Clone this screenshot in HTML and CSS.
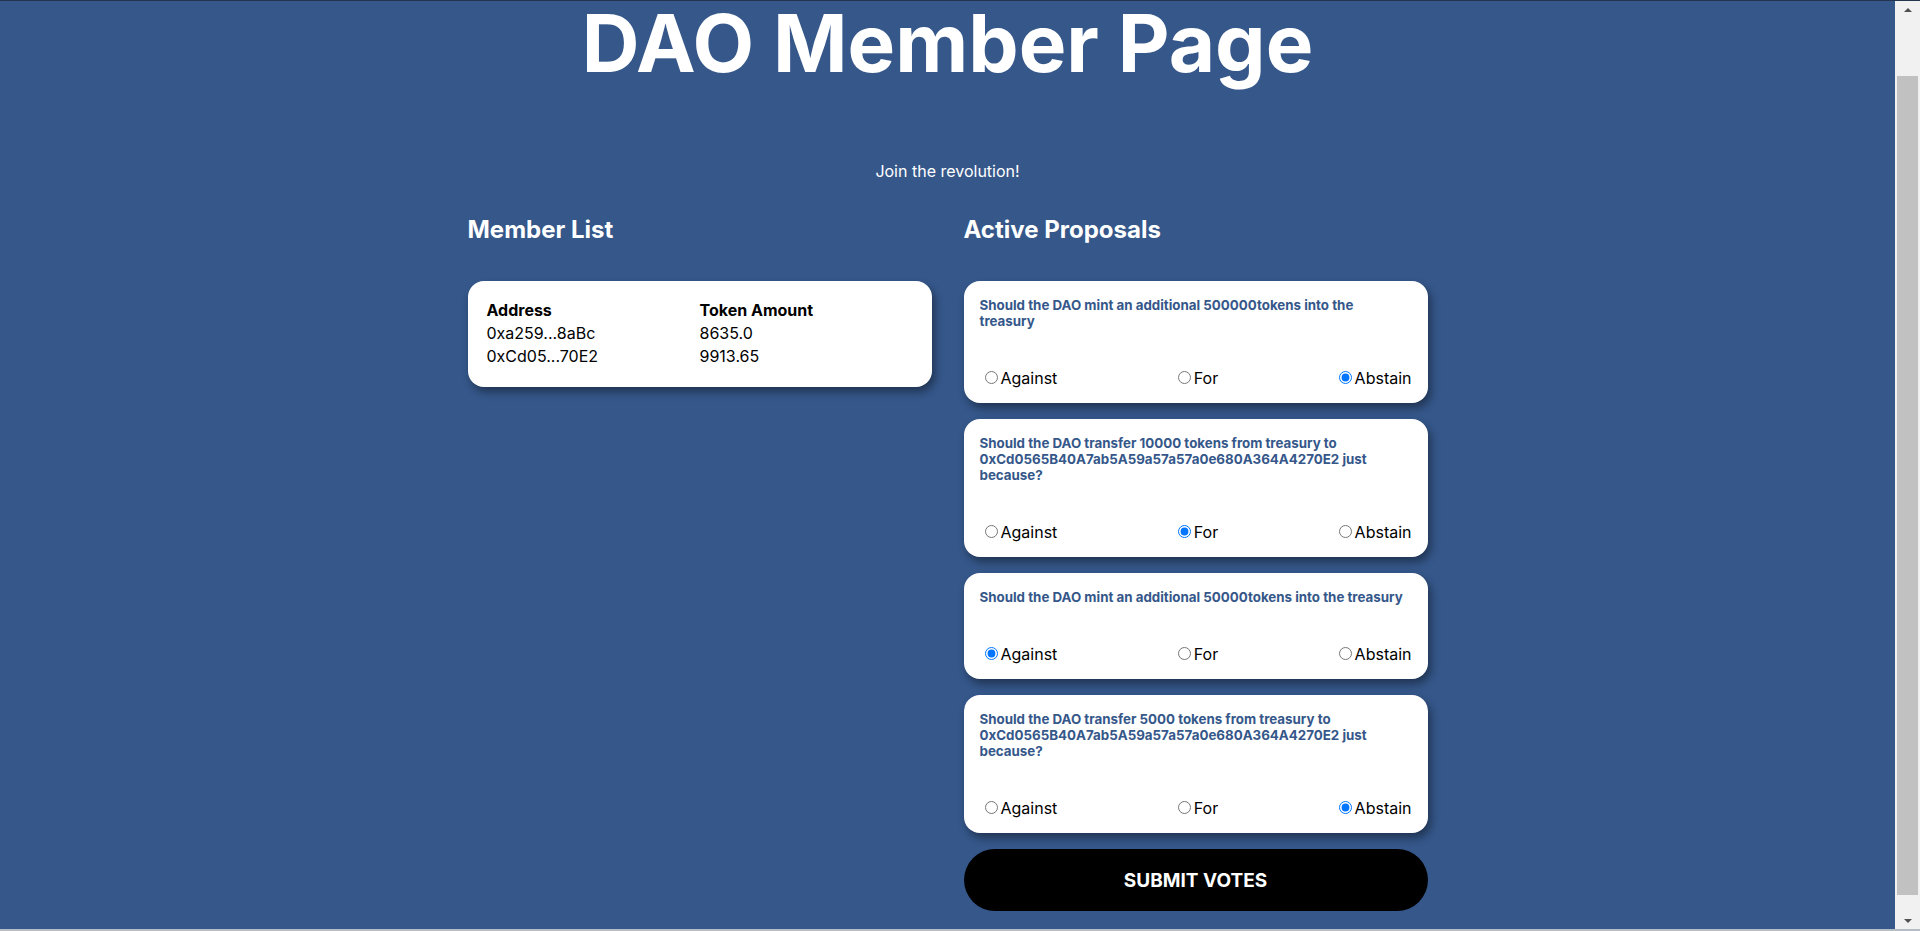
FILE: index.html
```html
<!DOCTYPE html>
<html lang="en">
<head>
<meta charset="utf-8">
<title>DAO Member Page</title>
<link rel="stylesheet" href="styles.css">
</head>
<body>
<main class="page">
  <h1 class="title">DAO Member Page</h1>
  <p class="tagline">Join the revolution!</p>
  <div class="columns">
    <section class="column">
      <h2 class="column-title">Member List</h2>
      <div class="card member-card">
        <div class="member-grid">
          <span class="head">Address</span><span class="head">Token Amount</span>
          <span>0xa259...8aBc</span><span>8635.0</span>
          <span>0xCd05...70E2</span><span>9913.65</span>
        </div>
      </div>
    </section>
    <section class="column">
      <h2 class="column-title">Active Proposals</h2>
      <form class="proposals">
        <div class="card proposal">
          <p class="question">Should the DAO mint an additional 500000tokens into the treasury</p>
          <div class="choices">
            <label class="choice"><input type="radio" name="p1">Against</label>
            <label class="choice"><input type="radio" name="p1">For</label>
            <label class="choice"><input type="radio" name="p1" checked>Abstain</label>
          </div>
        </div>
        <div class="card proposal">
          <p class="question">Should the DAO transfer 10000 tokens from treasury to 0xCd0565B40A7ab5A59a57a57a0e680A364A4270E2 just because?</p>
          <div class="choices">
            <label class="choice"><input type="radio" name="p2">Against</label>
            <label class="choice"><input type="radio" name="p2" checked>For</label>
            <label class="choice"><input type="radio" name="p2">Abstain</label>
          </div>
        </div>
        <div class="card proposal">
          <p class="question">Should the DAO mint an additional 50000tokens into the treasury</p>
          <div class="choices">
            <label class="choice"><input type="radio" name="p3" checked>Against</label>
            <label class="choice"><input type="radio" name="p3">For</label>
            <label class="choice"><input type="radio" name="p3">Abstain</label>
          </div>
        </div>
        <div class="card proposal">
          <p class="question">Should the DAO transfer 5000 tokens from treasury to 0xCd0565B40A7ab5A59a57a57a0e680A364A4270E2 just because?</p>
          <div class="choices">
            <label class="choice"><input type="radio" name="p4">Against</label>
            <label class="choice"><input type="radio" name="p4">For</label>
            <label class="choice"><input type="radio" name="p4" checked>Abstain</label>
          </div>
        </div>
        <button type="button" class="submit">Submit Votes</button>
      </form>
    </section>
  </div>
</main>
<div class="frame-top"></div>
<div class="frame-bottom"></div>
<div class="scrollbar" aria-hidden="true">
  <div class="sb-arrow sb-up"></div>
  <div class="sb-track"><div class="sb-thumb"></div></div>
  <div class="sb-arrow sb-down"></div>
</div>
<script src="script.js"></script>
</body>
</html>
```

FILE: styles.css
```css
html {
  background: #35578a;
}

body {
  margin: 0;
  background: #35578a;
  font-family: Inter, "Liberation Sans", sans-serif;
  color: #ffffff;
}

.page {
  display: flex;
  flex-direction: column;
  align-items: center;
  padding: 54px 25px 50px 0;
}

.title {
  margin: 0;
  font-size: 80px;
  line-height: 97px;
  font-weight: 700;
}

.tagline {
  margin: 70px 0 34px;
  font-size: 16px;
  line-height: 20px;
}

.columns {
  width: 960px;
  display: grid;
  grid-template-columns: 464px 464px;
  column-gap: 32px;
  align-items: start;
}

.column-title {
  margin: 0 0 37px;
  font-size: 24px;
  line-height: 29px;
  font-weight: 700;
}

.card {
  background: #ffffff;
  border-radius: 16px;
  box-shadow: 3px 5px 8px rgba(0, 0, 0, 0.4);
  color: #000000;
}

.member-card {
  padding: 18px 19px 19px;
}

.member-grid {
  display: grid;
  grid-template-columns: 1fr 1fr;
  font-size: 16px;
  line-height: 23px;
}

.head {
  font-weight: 700;
}

.proposals {
  display: flex;
  flex-direction: column;
  gap: 16px;
}

.proposal {
  padding: 16px 16px 15px;
}

.question {
  margin: 0 0 39px;
  font-size: 13.333px;
  line-height: 16px;
  font-weight: 700;
  color: #35578a;
}

.choices {
  display: flex;
  justify-content: space-between;
  font-size: 16px;
  line-height: 20px;
}

.choice input {
  margin: 3px 3px 0 5px;
}

.submit {
  height: 62px;
  border: none;
  border-radius: 31px;
  background: #000000;
  color: #ffffff;
  font-family: Inter, "Liberation Sans", sans-serif;
  font-size: 19px;
  font-weight: 700;
  text-transform: uppercase;
  cursor: pointer;
}

.frame-top {
  position: fixed;
  top: 0;
  left: 0;
  right: 0;
  height: 1px;
  background: #24344f;
}

.frame-bottom {
  position: fixed;
  bottom: 0;
  left: 0;
  right: 0;
  height: 2px;
  background: #b6bcc6;
}

.scrollbar {
  position: fixed;
  top: 1px;
  right: 0;
  bottom: 2px;
  width: 25px;
  background: #f1f1f1;
  display: flex;
  flex-direction: column;
}

.sb-arrow {
  height: 17px;
  display: flex;
  align-items: center;
  justify-content: center;
}

.sb-up::before {
  content: "";
  border-left: 4px solid transparent;
  border-right: 4px solid transparent;
  border-bottom: 4px solid #505050;
}

.sb-down::before {
  content: "";
  border-left: 4px solid transparent;
  border-right: 4px solid transparent;
  border-top: 4px solid #505050;
}

.sb-track {
  flex: 1;
  padding: 58px 2px 17px;
  display: flex;
}

.sb-thumb {
  flex: 1;
  background: #c1c1c1;
}
```

FILE: script.js
```js
window.scrollTo(0, 60);
```
